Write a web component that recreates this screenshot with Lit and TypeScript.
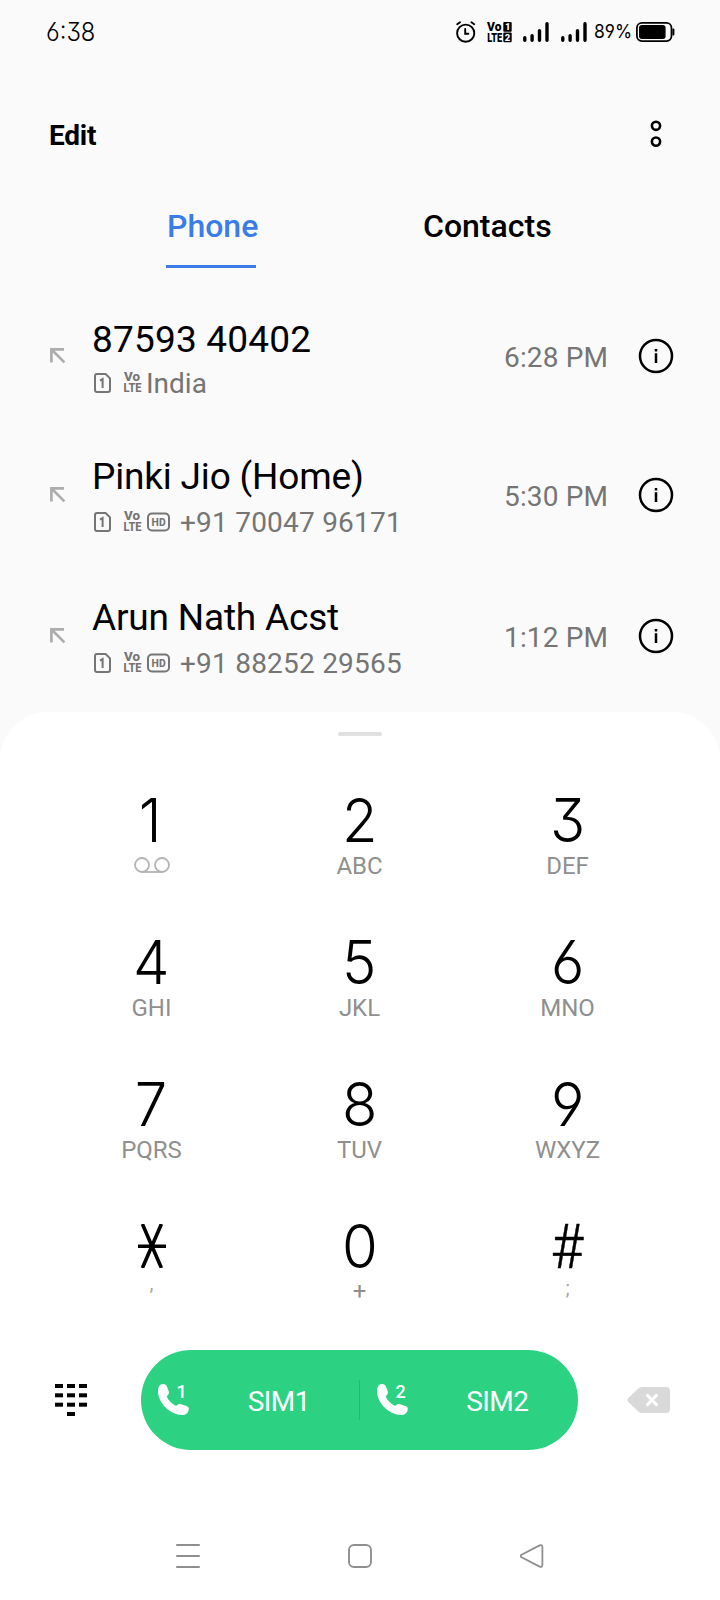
import { LitElement, html, svg, css, nothing } from "lit";
import { customElement, property } from "lit/decorators.js";

interface Call {
  name: string;
  detail: string;
  time: string;
  hd: boolean;
  size: string;
}

const CALLS: Call[] = [
  { name: "87593 40402", detail: "India", time: "6:28 PM", hd: false, size: "first" },
  { name: "Pinki Jio (Home)", detail: "+91 70047 96171", time: "5:30 PM", hd: true, size: "middle" },
  { name: "Arun Nath Acst", detail: "+91 88252 29565", time: "1:12 PM", hd: true, size: "last" },
];

const KEYS: [string, string][] = [
  ["1", ""], ["2", "ABC"], ["3", "DEF"],
  ["4", "GHI"], ["5", "JKL"], ["6", "MNO"],
  ["7", "PQRS"], ["8", "TUV"], ["9", "WXYZ"],
  ["*", ","], ["0", "+"], ["#", ";"],
];

@customElement("status-bar")
export class StatusBar extends LitElement {
  static styles = css`
    :host { display: flex; align-items: center; height: 64px; padding: 0 46px; box-sizing: border-box; font-family: Inter, sans-serif; color: #000; }
    svg { display: block; flex: none; overflow: visible; }
    .clock { flex: 1; font-size: 25px; font-weight: 300; line-height: 30px; font-feature-settings: "cv09", "cv03", "cv04"; transform: scaleX(0.95); transform-origin: left; }
    .alarm { margin-right: 11px; }
    .volte { margin-right: 10px; }
    .signal { margin-right: 12px; }
    .signal.second { margin-right: 7px; }
    .percent { width: 42px; font-size: 18px; line-height: 24px; white-space: nowrap; font-feature-settings: "cv04"; transform: scaleX(0.97); transform-origin: left; }
    .mini { font-family: Roboto, sans-serif; font-weight: 900; }
  `;

  private signal(cls: string) {
    return html`<svg class="signal ${cls}" width="26" height="20" viewBox="0 0 26 20" stroke="#000" stroke-width="3.4" stroke-linecap="round">
      <path d="M1.8 15.8v2.5M9.1 13.8v4.5M16.5 8.6v9.7M24 1.7v16.6" />
    </svg>`;
  }

  render() {
    return html`
      <span class="clock">6:38</span>
      <svg class="alarm" width="20" height="22" viewBox="0 0 20 22" fill="none" stroke="#000" stroke-width="1.9" stroke-linecap="round">
        <circle cx="9.7" cy="12.2" r="8.6" />
        <path d="M9.2 8v4.8h3.2M1.2 3.2l2.8-2M18.2 3.2l-2.8-2" />
      </svg>
      <svg class="volte" width="26" height="20" viewBox="0 0 26 20">
        <text class="mini" x="0" y="9.3" font-size="13" textLength="14.4" lengthAdjust="spacingAndGlyphs">Vo</text>
        <text class="mini" x="0.2" y="20" font-size="13" textLength="15" lengthAdjust="spacingAndGlyphs">LTE</text>
        <rect x="16.3" y="0" width="8.4" height="9.8" rx="1" />
        <rect x="16.3" y="10.4" width="8.4" height="9.8" rx="1" />
        <text class="mini" x="18" y="8.2" font-size="9.5" fill="#fafafa">1</text>
        <text class="mini" x="17.8" y="18.6" font-size="9.5" fill="#fafafa">2</text>
      </svg>
      ${this.signal("")} ${this.signal("second")}
      <span class="percent">89%</span>
      <svg width="38" height="20" viewBox="0 0 38 20">
        <rect x="0.9" y="0.9" width="34.6" height="18.2" rx="5" fill="none" stroke="#000" stroke-width="1.8" />
        <rect x="3" y="3" width="26.6" height="14" rx="3" />
        <rect x="36.4" y="6.6" width="2" height="7" rx="1" />
      </svg>
    `;
  }
}

@customElement("call-row")
export class CallRow extends LitElement {
  @property({ attribute: false }) call!: Call;

  static styles = css`
    :host { display: block; font-family: Roboto, sans-serif; }
    .row { display: flex; align-items: center; padding: 0 46px 0 50px; box-sizing: border-box; }
    .row.first { height: 140px; }
    .row.middle { height: 138px; }
    .row.last { height: 144px; }
    svg { display: block; flex: none; overflow: visible; }
    .arrow { margin-right: 26px; }
    .body { flex: 1; display: flex; flex-direction: column; padding-top: 9px; }
    .first .body { padding-top: 11px; }
    .name { font-size: 37px; line-height: 44px; letter-spacing: -0.18px; color: #000; margin-bottom: 2px; white-space: nowrap; }
    .first .name { margin-bottom: 0; letter-spacing: 0.2px; }
    .sub { display: flex; align-items: center; height: 44px; color: #757575; white-space: nowrap; }
    .sim { margin: 0 12px 2px 2px; }
    .volte { margin: 0 4px 2px 0; }
    .hd { margin: 0 0 2px 1px; }
    .detail { font-size: 28px; line-height: 44px; }
    .hd + .detail { margin-left: 10px; letter-spacing: 0.22px; }
    .time { font-size: 28px; line-height: 34px; letter-spacing: 0.12px; color: #757575; margin: 4px 30px 0 0; }
    .mini { font-family: Roboto, sans-serif; font-weight: 800; fill: #757575; }
  `;

  render() {
    const c = this.call;
    return html`<div class="row ${c.size}">
      <svg class="arrow" width="16" height="16" viewBox="0 0 16 16" fill="none" stroke="#adadad" stroke-width="2.7">
        <path d="M1.4 14.4V1.4H14M1.8 1.8l12.6 12.6" />
      </svg>
      <div class="body">
        <div class="name">${c.name}</div>
        <div class="sub">
          <svg class="sim" width="18" height="20" viewBox="0 0 18 20" fill="none" stroke="#757575" stroke-width="2">
            <path d="M3 1H11.6L16 5.4V17a2 2 0 0 1-2 2H3a2 2 0 0 1-2-2V3a2 2 0 0 1 2-2Z" />
            <path d="M6 7.6L8.6 6v9" />
          </svg>
          <svg class="volte" width="18" height="20" viewBox="0 0 18 20">
            <text class="mini" x="0" y="8.2" font-size="12" textLength="16" lengthAdjust="spacingAndGlyphs">Vo</text>
            <text class="mini" x="-0.4" y="19.4" font-size="12" textLength="18" lengthAdjust="spacingAndGlyphs">LTE</text>
          </svg>
          ${c.hd
            ? html`<svg class="hd" width="23" height="20" viewBox="0 0 23 20">
                <rect x="1" y="1.5" width="21" height="17" rx="4" fill="none" stroke="#757575" stroke-width="2" />
                <text class="mini" x="4.6" y="13.9" font-size="11" textLength="14" lengthAdjust="spacingAndGlyphs">HD</text>
              </svg>`
            : nothing}
          <span class="detail">${c.detail}</span>
        </div>
      </div>
      <span class="time">${c.time}</span>
      <svg width="36" height="36" viewBox="0 0 36 36" fill="none" stroke="#000" stroke-width="2.5">
        <circle cx="18" cy="18" r="16" />
        <path d="M18 15.2V25M18 11v2.6" />
      </svg>
    </div>`;
  }
}

@customElement("dial-pad")
export class DialPad extends LitElement {
  static styles = css`
    :host { display: grid; grid-template-columns: repeat(3, 208px); grid-auto-rows: 142px; justify-content: center; padding-right: 1px; }
    .key { display: flex; flex-direction: column; align-items: center; }
    .digit { font-family: Inter, sans-serif; font-weight: 300; font-size: 61px; line-height: 62px; height: 60px; color: #000; font-feature-settings: "cv09", "cv03", "cv04"; transform: scaleX(0.95); }
    .k1 { padding-right: 3px; }
    .hash { font-family: Roboto, sans-serif; font-size: 62px; line-height: 64px; transform: scaleX(0.9); padding-right: 1px; -webkit-text-stroke: 0.5px #000; }
    .letters { font-family: Roboto, sans-serif; font-size: 24px; line-height: 28px; margin-top: 3px; color: #8f8f8f; }
    .plus { margin-top: 2px; }
    .comma, .semi { font-size: 20px; line-height: 24px; color: #a8a8a8; }
    .comma { margin-top: -4px; }
    .semi { margin-top: 1px; }
    svg { display: block; }
    .star { margin: 9px 0 7px; }
    .voicemail { margin-top: 8px; }
  `;

  private digit(d: string) {
    if (d === "*") {
      return html`<svg class="star" width="30" height="44" viewBox="0 0 30 44" fill="none" stroke="#000" stroke-width="3.6">
        <path d="M1 22.2H29M5.4 0L24.4 44M24.4 0L5.4 44" />
      </svg>`;
    }
    return html`<div class="digit ${d === "#" ? "hash" : "k" + d}">${d}</div>`;
  }

  private letters(d: string, t: string) {
    if (d === "1") {
      return html`<svg class="voicemail" width="36" height="16" viewBox="0 0 36 16" fill="none" stroke="#b4b4b4" stroke-width="1.8">
        <circle cx="8" cy="8" r="7" /><circle cx="28" cy="8" r="7" /><path d="M8 15H28" />
      </svg>`;
    }
    const kind = t === "," ? "comma" : t === ";" ? "semi" : t === "+" ? "plus" : "";
    return html`<div class="letters ${kind}">${t}</div>`;
  }

  render() {
    return KEYS.map(([d, t]) => html`<div class="key">${this.digit(d)}${this.letters(d, t)}</div>`);
  }
}

@customElement("call-bar")
export class CallBar extends LitElement {
  static styles = css`
    :host { display: flex; align-items: center; justify-content: space-between; padding: 0 49px 0 55px; font-family: Roboto, sans-serif; }
    svg { display: block; flex: none; overflow: visible; }
    .pill { display: flex; align-items: center; width: 437px; height: 100px; border-radius: 50px; background: #2cd282; color: #fff; margin-left: 5px; }
    .half { flex: 1; display: flex; align-items: center; padding-left: 17px; }
    .half.second { padding-left: 17px; }
    .label { flex: 1; text-align: center; font-size: 28px; letter-spacing: -0.6px; line-height: 34px; margin-top: 3px; padding-left: 8px; }
    .divider { width: 1px; height: 40px; background: #24b871; margin-left: -1px; }
    .num { font-family: Roboto, sans-serif; font-weight: 500; font-size: 18px; fill: #fff; }
  `;

  private half(n: string) {
    return html`<div class="half ${n === "2" ? "second" : ""}">
      <svg width="32" height="32" viewBox="0 0 32 32">
        <path fill="#fff" d="M0 7C0 3.5 1.5 0 5 0C7.5 0 8.7 1.5 9.3 3.5L10.8 7.5C11.3 9 10.8 10.3 8.6 12.4C10.5 16.5 14 20 18.2 21.9C20 20 21.5 19.7 23 20.2L28.5 22C30.8 22.8 31 24 30.7 26C30 29.5 27.5 31 24.5 31C12 31 0 19 0 7Z" />
        <text class="num" x="18.4" y="14">${n}</text>
      </svg>
      <span class="label">SIM${n}</span>
    </div>`;
  }

  render() {
    const cells = [0, 9.3, 18.7].flatMap((y) => [0, 12, 24].map((x) => [x, y]));
    cells.push([12, 28]);
    return html`
      <svg width="32" height="32" viewBox="0 0 32 32">
        ${cells.map(([x, y]) => svg`<rect x=${x} y=${y} width="8" height="4" />`)}
      </svg>
      <div class="pill">${this.half("1")}<div class="divider"></div>${this.half("2")}</div>
      <svg width="44" height="26" viewBox="0 0 44 26">
        <path fill="#d9d9d9" d="M13 0.6Q14 0 15.2 0H39a4 4 0 0 1 4 4V22a4 4 0 0 1-4 4H15.2Q13 26 11.8 25L1.3 15Q-0.6 13 1.3 11L11 1.8Z" />
        <path d="M20.4 8.4L29.4 17.6M29.4 8.4L20.4 17.6" stroke="#fff" stroke-width="3" stroke-linecap="round" />
      </svg>
    `;
  }
}

@customElement("nav-bar")
export class NavBar extends LitElement {
  static styles = css`
    :host { display: flex; justify-content: space-between; align-items: center; padding: 0 176px; }
    svg { display: block; }
  `;

  render() {
    return html`
      <svg width="24" height="24" viewBox="0 0 24 24" stroke="#8f8f8f" stroke-width="2" stroke-linecap="round">
        <path d="M1 1H23M1 12H23M1 23H23" />
      </svg>
      <svg width="24" height="24" viewBox="0 0 24 24" fill="none" stroke="#8f8f8f" stroke-width="1.9">
        <rect x="1" y="1" width="22" height="22" rx="5" />
      </svg>
      <svg width="24" height="24" viewBox="0 0 24 24" fill="none" stroke="#8f8f8f" stroke-width="1.8" stroke-linejoin="round">
        <path d="M1.6 10.8L19.6 1.4Q22.4 0.4 22.4 3.2V20.8Q22.4 23.6 19.6 22.6L1.6 13.2Q-0.4 12 1.6 10.8Z" />
      </svg>
    `;
  }
}

@customElement("app-root")
export class AppRoot extends LitElement {
  static styles = css`
    :host { display: flex; flex-direction: column; width: 720px; height: 1600px; overflow: hidden; background: #fafafa; font-family: Roboto, sans-serif; color: #000; }
    .header { display: flex; align-items: center; justify-content: space-between; height: 142px; padding: 0 58px 0 49px; }
    .edit { font-size: 28px; font-weight: 700; line-height: 34px; letter-spacing: -0.2px; margin-top: 2px; }
    .dots { display: block; margin-bottom: 2px; }
    .tabs { display: flex; height: 80px; padding-left: 166px; }
    .tab { font-size: 32px; font-weight: 500; line-height: 40px; white-space: nowrap; }
    .active { box-sizing: border-box; width: 90px; height: 62px; color: #3b7de8; text-indent: 1px; border-bottom: 3px solid #3b7de8; margin-right: 167px; }
    .list { height: 426px; }
    .sheet { display: flex; flex-direction: column; height: 888px; background: #fff; border-radius: 48px 48px 0 0; }
    .handle { width: 44px; height: 4px; border-radius: 2px; background: #e0e0e0; margin: 20px auto 53px; flex: none; }
    dial-pad { height: 561px; }
    nav-bar { margin-top: 94px; }
  `;

  render() {
    return html`
      <status-bar></status-bar>
      <div class="header">
        <span class="edit">Edit</span>
        <svg class="dots" width="12" height="28" viewBox="0 0 12 28" fill="none" stroke="#000" stroke-width="2.6">
          <circle cx="6" cy="5.8" r="4.1" /><circle cx="6" cy="21.6" r="4.1" />
        </svg>
      </div>
      <div class="tabs">
        <span class="tab active">Phone</span>
        <span class="tab">Contacts</span>
      </div>
      <div class="list">${CALLS.map((c) => html`<call-row .call=${c}></call-row>`)}</div>
      <div class="sheet">
        <div class="handle"></div>
        <dial-pad></dial-pad>
        <call-bar></call-bar>
        <nav-bar></nav-bar>
      </div>
    `;
  }
}
